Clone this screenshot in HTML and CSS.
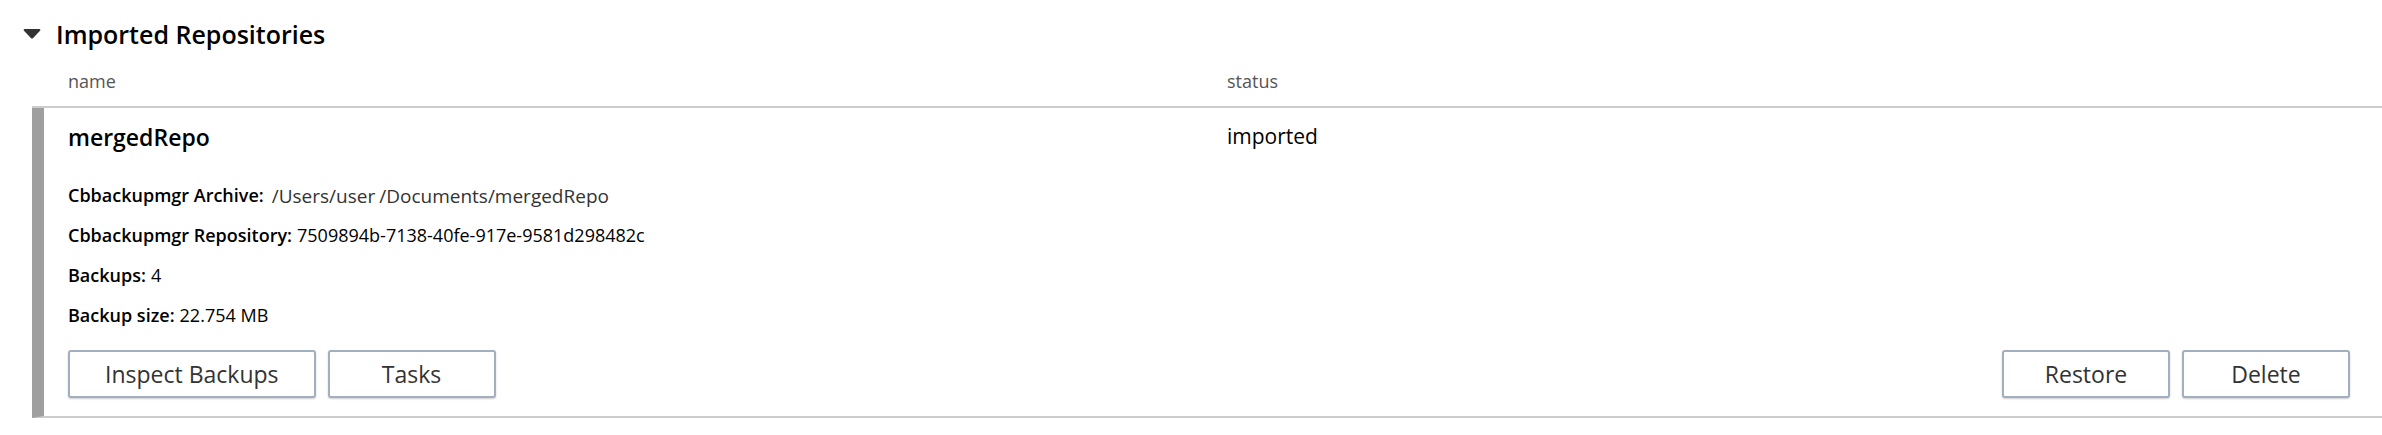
FILE: index.html
```html
<!DOCTYPE html>
<html lang="en">
<head>
<meta charset="utf-8">
<title>Imported Repositories</title>
<link rel="stylesheet" href="styles.css">
</head>
<body>
<main class="section">
  <h1 class="section-title">
    <button class="toggle" type="button" aria-expanded="true">
      <svg class="caret" viewBox="0 0 18 10" aria-hidden="true"><path d="M1.800 0H16.200Q18 .3 17 1.800L10.200 9Q9 10.200 7.800 9L1 1.800Q0 .3 1.800 0Z"/></svg>
      Imported Repositories
    </button>
  </h1>
  <div class="list">
    <div class="row head"><span>name</span><span>status</span></div>
    <article class="repo">
      <div class="row summary">
        <h2 class="repo-name">mergedRepo</h2>
        <span class="status">imported</span>
      </div>
      <dl class="details">
        <div class="detail archive"><dt>Cbbackupmgr Archive:</dt><dd>/Users/user<span class="subpath">/Documents/mergedRepo</span></dd></div>
        <div class="detail"><dt>Cbbackupmgr Repository:</dt><dd>7509894b-7138-40fe-917e-9581d298482c</dd></div>
        <div class="detail"><dt>Backups:</dt><dd>4</dd></div>
        <div class="detail"><dt>Backup size:</dt><dd>22.754 MB</dd></div>
      </dl>
      <div class="actions">
        <div class="group"><button class="btn" type="button">Inspect Backups</button><button class="btn" type="button">Tasks</button></div>
        <div class="group"><button class="btn" type="button">Restore</button><button class="btn" type="button">Delete</button></div>
      </div>
    </article>
  </div>
</main>
</body>
</html>
```
FILE: styles.css
```css
* { box-sizing: border-box; }
body { margin: 0; background: #fff; color: #000; font-family: "Open Sans", sans-serif; }
.section { padding-top: 15px; }
.section-title { margin: 0; padding-left: 23px; line-height: 38px; }
.toggle { display: flex; align-items: center; gap: 15px; padding: 0; border: 0; background: none; color: #000; font: 600 25px/38px "Open Sans", sans-serif; }
.caret { width: 18px; height: 10px; fill: #333; }
.list { margin-left: 32px; }
.row { display: grid; grid-template-columns: 1159fr 1155fr; padding-left: 36px; }
.head { padding: 16px 0 13px 36px; border-bottom: 2px solid #ccc; font-size: 18px; line-height: 24px; color: #555; }
.repo { border-left: 12px solid #9f9f9f; border-bottom: 2px solid #ccc; padding: 11px 0 18px; }
.summary { padding-left: 24px; }
.repo-name { margin: 0; font-size: 23px; font-weight: 600; line-height: 36px; }
.status { font-size: 21px; line-height: 34px; }
.details { margin: 20px 0 15px 24px; }
.detail { display: flex; gap: 5px; height: 40px; align-items: center; font-size: 18px; line-height: 28px; }
.detail dt { font-weight: 600; }
.detail dd { margin: 0; }
.archive { gap: 8px; }
.archive dd { padding-top: 2px; font-size: 19px; color: #333; }
.subpath { margin-left: 4px; }
.actions { display: flex; justify-content: space-between; padding: 0 32px 0 24px; }
.group { display: flex; gap: 12px; }
.btn { min-width: 168px; height: 48px; padding: 0 35px 1px; border: 2px solid #a2afbf; border-radius: 3px; background: #fff; box-shadow: 0 1px 2px #0003; color: #333; font: 400 23px/36px "Open Sans", sans-serif; }
```
